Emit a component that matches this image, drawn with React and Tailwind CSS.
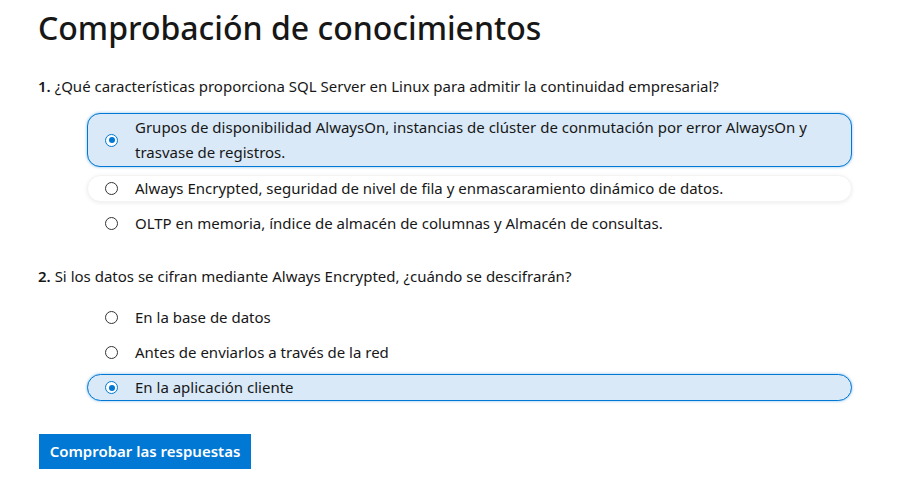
import React from "react";

const font = { fontFamily: '"Noto Sans", "Open Sans", sans-serif' };

function Radio({ checked }) {
  return checked ? (
    <span className="flex h-[13px] w-[13px] shrink-0 items-center justify-center rounded-full border border-[#0078d4] bg-white">
      <span className="h-[6px] w-[6px] rounded-full bg-[#0078d4]" />
    </span>
  ) : (
    <span className="h-[13px] w-[13px] shrink-0 rounded-full border border-[#333] bg-white" />
  );
}

function Option({ text, state, tall }) {
  let box = "border border-transparent";
  if (state === "selected")
    box = "border border-[#0078d4] bg-[#d9e9f7] shadow-[0_0_3px_rgba(0,120,212,0.5)]";
  if (state === "hover")
    box = "border border-[#f3f3f3] bg-white shadow-[0_1px_4px_rgba(0,0,0,0.08)]";
  return (
    <div
      className={`flex items-center gap-[17px] pl-[17px] pr-4 ${
        tall ? "rounded-[13px] py-[1px]" : "rounded-full h-[27px]"
      } ${box}`}
    >
      <Radio checked={state === "selected"} />
      <span className="text-[15px] leading-[25px] text-[#171717]">{text}</span>
    </div>
  );
}

export default function App() {
  return (
    <div className="min-h-[488px] bg-white pl-[38px] pt-[4px]" style={font}>
      <h1 className="text-[32px] font-medium leading-[48px] text-[#171717]">
        Comprobación de conocimientos
      </h1>
      <p className="mt-[24px] text-[15px] leading-[20px] text-[#171717]">
        <span className="font-semibold">1.</span> ¿Qué características proporciona SQL Server en Linux para admitir la continuidad empresarial?
      </p>
      <div className="mt-[17px] ml-[49px] mr-[66px] flex flex-col gap-[8px]">
        <Option
          tall
          state="selected"
          text={
            <>
              Grupos de disponibilidad AlwaysOn, instancias de clúster de conmutación por error AlwaysOn y
              <br />
              trasvase de registros.
            </>
          }
        />
        <Option state="hover" text="Always Encrypted, seguridad de nivel de fila y enmascaramiento dinámico de datos." />
        <Option text="OLTP en memoria, índice de almacén de columnas y Almacén de consultas." />
      </div>
      <p className="mt-[29px] text-[15px] leading-[20px] text-[#171717]">
        <span className="font-semibold">2.</span> Si los datos se cifran mediante Always Encrypted, ¿cuándo se descifrarán?
      </p>
      <div className="mt-[18px] ml-[49px] mr-[66px] flex flex-col gap-[8px]">
        <Option text="En la base de datos" />
        <Option text="Antes de enviarlos a través de la red" />
        <Option state="selected" text="En la aplicación cliente" />
      </div>
      <button className="mt-[33px] ml-[1px] h-[35px] w-[212px] bg-[#0078d4] text-[15px] font-semibold text-white">
        Comprobar las respuestas
      </button>
    </div>
  );
}
